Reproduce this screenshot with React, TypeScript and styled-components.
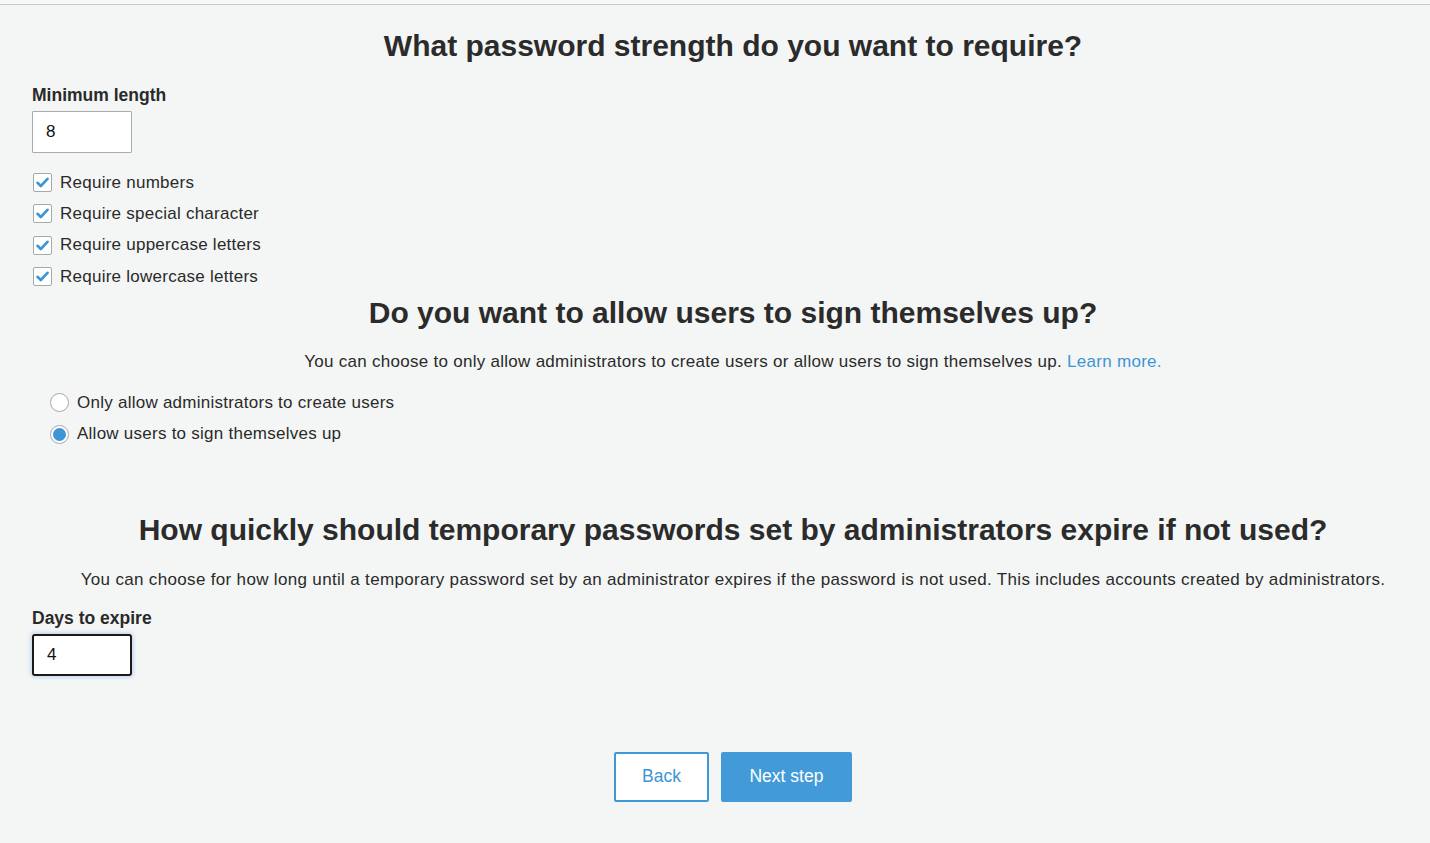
import React from "react";
import styled, { createGlobalStyle } from "styled-components";

const GlobalStyle = createGlobalStyle`
  html, body {
    margin: 0;
    padding: 0;
    background: #f4f6f5;
  }
  body {
    font-family: "Liberation Sans", Arial, sans-serif;
    color: #2a2a2a;
  }
`;

const TopRule = styled.div`
  height: 4px;
  background: #f7f8f7;
  border-bottom: 1px solid #c8c9c8;
`;

const Page = styled.div`
  padding: 0 0 0 32px;
  display: flex;
  flex-direction: column;
  align-items: flex-start;
`;

const Heading = styled.h2<{ $top: number }>`
  align-self: stretch;
  margin: ${(p) => p.$top}px 0 0;
  padding-left: 4px;
  text-align: center;
  font-size: 30px;
  line-height: 34px;
  font-weight: 700;
  color: #2b2b2b;
`;

const Description = styled.p<{ $top: number; $spacing?: number }>`
  align-self: stretch;
  margin: ${(p) => p.$top}px 0 0;
  padding-left: 4px;
  text-align: center;
  font-size: 17px;
  letter-spacing: ${(p) => p.$spacing ?? 0.28}px;
  line-height: 20px;
  color: #2a2a2a;
`;

const Link = styled.a`
  color: #3d95d5;
  text-decoration: none;
`;

const FieldLabel = styled.label<{ $top: number }>`
  display: block;
  margin-top: ${(p) => p.$top}px;
  font-size: 17.5px;
  line-height: 20px;
  font-weight: 700;
  color: #2a2a2a;
`;

const NumberInput = styled.input<{ $focused?: boolean }>`
  box-sizing: border-box;
  margin-top: 6px;
  width: 100px;
  height: 42px;
  padding: 0 13px;
  font-family: "Liberation Sans", Arial, sans-serif;
  font-size: 17px;
  color: #111;
  background: #fff;
  outline: none;
  border: ${(p) => (p.$focused ? "2px solid #1a1a1a" : "1px solid #a9abad")};
  border-radius: ${(p) => (p.$focused ? "3px" : "1px")};
  box-shadow: ${(p) => (p.$focused ? "0 0 4px 1px rgba(110, 165, 220, 0.45)" : "none")};
`;

const OptionList = styled.div<{ $top: number; $indent?: number }>`
  display: flex;
  flex-direction: column;
  margin-top: ${(p) => p.$top}px;
  margin-left: ${(p) => p.$indent || 0}px;
`;

const OptionRow = styled.label`
  display: flex;
  align-items: center;
  gap: 8px;
  height: 31.3px;
  font-size: 17px;
  letter-spacing: 0.25px;
  color: #2a2a2a;
`;

const CheckBox = styled.span`
  box-sizing: border-box;
  width: 19px;
  height: 19px;
  margin-left: 1px;
  background: #fff;
  border: 1px solid #a6a8aa;
  border-radius: 2px;
  display: flex;
  align-items: center;
  justify-content: center;
`;

const RadioCircle = styled.span<{ $checked?: boolean }>`
  box-sizing: border-box;
  width: 19px;
  height: 19px;
  border-radius: 50%;
  background: #fff;
  border: 1px solid #a6a8aa;
  display: flex;
  align-items: center;
  justify-content: center;
  &::after {
    content: "";
    display: ${(p) => (p.$checked ? "block" : "none")};
    width: 13px;
    height: 13px;
    border-radius: 50%;
    background: #3d95d5;
  }
`;

const ButtonBar = styled.div`
  align-self: stretch;
  padding-left: 4px;
  margin-top: 76px;
  display: flex;
  justify-content: center;
  gap: 12px;
`;

const Button = styled.button<{ $primary?: boolean }>`
  box-sizing: border-box;
  height: 50px;
  padding: 0 ${(p) => (p.$primary ? "26.5px" : "26px")};
  font-family: "Liberation Sans", Arial, sans-serif;
  font-size: 17.5px;
  border-radius: 2px;
  cursor: pointer;
  color: ${(p) => (p.$primary ? "#fff" : "#3d95d5")};
  background: ${(p) => (p.$primary ? "#429bd8" : "#fff")};
  border: 2px solid ${(p) => (p.$primary ? "#429bd8" : "#3f98d7")};
`;

const Check = () => (
  <svg width="13" height="11" viewBox="0 0 13 11">
    <path d="M1.5 5.8 L4.8 9 L11.5 1.8" fill="none" stroke="#3d95d5" strokeWidth="2.6" strokeLinecap="round" strokeLinejoin="round" />
  </svg>
);

const requirements = [
  "Require numbers",
  "Require special character",
  "Require uppercase letters",
  "Require lowercase letters",
];

export default function App() {
  return (
    <>
      <GlobalStyle />
      <TopRule />
      <Page>
        <Heading $top={24}>What password strength do you want to require?</Heading>
        <FieldLabel $top={22}>Minimum length</FieldLabel>
        <NumberInput defaultValue="8" />
        <OptionList $top={14}>
          {requirements.map((r) => (
            <OptionRow key={r}>
              <CheckBox>
                <Check />
              </CheckBox>
              {r}
            </OptionRow>
          ))}
        </OptionList>

        <Heading $top={4}>Do you want to allow users to sign themselves up?</Heading>
        <Description $top={22}>
          You can choose to only allow administrators to create users or allow users to sign themselves up.{" "}
          <Link href="#">Learn more.</Link>
        </Description>
        <OptionList $top={15} $indent={18}>
          <OptionRow>
            <RadioCircle />
            Only allow administrators to create users
          </OptionRow>
          <OptionRow>
            <RadioCircle $checked />
            Allow users to sign themselves up
          </OptionRow>
        </OptionList>

        <Heading $top={63}>How quickly should temporary passwords set by administrators expire if not used?</Heading>
        <Description $top={23} $spacing={0.33}>
          You can choose for how long until a temporary password set by an administrator expires if the password is not used. This includes accounts created by administrators.
        </Description>
        <FieldLabel $top={18}>Days to expire</FieldLabel>
        <NumberInput $focused defaultValue="4" />

        <ButtonBar>
          <Button>Back</Button>
          <Button $primary>Next step</Button>
        </ButtonBar>
      </Page>
    </>
  );
}
